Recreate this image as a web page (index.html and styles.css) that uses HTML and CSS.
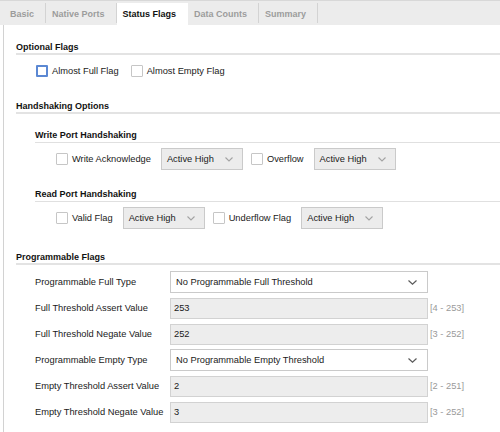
FILE: index.html
```html
<!DOCTYPE html>
<html>
<head>
<meta charset="utf-8">
<link rel="stylesheet" href="styles.css">
</head>
<body>
<div class="tabs">
  <div class="tab">Basic</div>
  <div class="tab">Native Ports</div>
  <div class="tab active">Status Flags</div>
  <div class="tab">Data Counts</div>
  <div class="tab">Summary</div>
</div>
<div class="panel">
  <div class="section-title t-optional">Optional Flags</div>
  <div class="flags-row">
    <div class="check"><span class="cb focus"></span><span>Almost Full Flag</span></div>
    <div class="check"><span class="cb"></span><span>Almost Empty Flag</span></div>
  </div>

  <div class="section-title t-hand">Handshaking Options</div>
  <div class="sub">
    <div class="sub-title t-write">Write Port Handshaking</div>
    <div class="hs-row">
      <div class="check"><span class="cb"></span><span>Write Acknowledge</span></div>
      <div class="select small"><span>Active High</span><svg class="chev" width="8" height="5" viewBox="0 0 8 5"><polyline points="0.5,0.5 4,4 7.5,0.5" /></svg></div>
      <div class="check"><span class="cb"></span><span>Overflow</span></div>
      <div class="select small"><span>Active High</span><svg class="chev" width="8" height="5" viewBox="0 0 8 5"><polyline points="0.5,0.5 4,4 7.5,0.5" /></svg></div>
    </div>
    <div class="sub-title t-read">Read Port Handshaking</div>
    <div class="hs-row">
      <div class="check"><span class="cb"></span><span>Valid Flag</span></div>
      <div class="select small"><span>Active High</span><svg class="chev" width="8" height="5" viewBox="0 0 8 5"><polyline points="0.5,0.5 4,4 7.5,0.5" /></svg></div>
      <div class="check"><span class="cb"></span><span>Underflow Flag</span></div>
      <div class="select small"><span>Active High</span><svg class="chev" width="8" height="5" viewBox="0 0 8 5"><polyline points="0.5,0.5 4,4 7.5,0.5" /></svg></div>
    </div>
  </div>

  <div class="section-title t-prog">Programmable Flags</div>
  <div class="prog-grid">
    <div class="lbl">Programmable Full Type</div>
    <div class="select wide"><span>No Programmable Full Threshold</span><svg class="chev dark" width="9" height="5" viewBox="0 0 9 5"><polyline points="0.5,0.5 4.5,4.2 8.5,0.5" /></svg></div>
    <div class="range"></div>

    <div class="lbl">Full Threshold Assert Value</div>
    <div class="field">253</div>
    <div class="range">[4 - 253]</div>

    <div class="lbl">Full Threshold Negate Value</div>
    <div class="field">252</div>
    <div class="range">[3 - 252]</div>

    <div class="lbl">Programmable Empty Type</div>
    <div class="select wide"><span>No Programmable Empty Threshold</span><svg class="chev dark" width="9" height="5" viewBox="0 0 9 5"><polyline points="0.5,0.5 4.5,4.2 8.5,0.5" /></svg></div>
    <div class="range"></div>

    <div class="lbl">Empty Threshold Assert Value</div>
    <div class="field">2</div>
    <div class="range">[2 - 251]</div>

    <div class="lbl">Empty Threshold Negate Value</div>
    <div class="field">3</div>
    <div class="range">[3 - 252]</div>
  </div>
</div>
</body>
</html>
```

FILE: styles.css
```css
html, body {
  margin: 0;
  padding: 0;
  background: #ffffff;
}
body {
  width: 500px;
  height: 432px;
  overflow: hidden;
  font-family: "Liberation Sans", Arial, sans-serif;
  font-size: 9.3px;
  color: #1a1a1a;
}

/* Tabs */
.tabs {
  display: flex;
  height: 24px;
  border-top: 1px solid #d8d8d8;
  background: #ececec;
  padding-left: 4px;
}
.tab {
  position: relative;
  margin-top: 2px;
  height: 22px;
  line-height: 22px;
  padding: 0 12px 0 6px;
  font-weight: bold;
  font-size: 9px;
  color: #9c9c9c;
  white-space: nowrap;
}
.tab::after {
  content: "";
  position: absolute;
  right: 0;
  top: 0;
  width: 1px;
  height: 20px;
  background: #d3d3d3;
}
.tab.active {
  background: #ffffff;
  color: #111111;
}
.tab.active::after {
  display: none;
}

/* Panel */
.panel {
  margin-left: 3px;
  border-left: 1px solid #d2d2d2;
  padding-left: 12px;
  height: 407px;
  box-sizing: border-box;
  overflow: hidden;
}

.section-title {
  font-weight: bold;
  font-size: 9px;
  line-height: 12px;
  color: #111111;
  border-bottom: 2px solid #e3e3e3;
}
.t-optional { margin-top: 16px; }
.t-hand { margin-top: 21px; }
.t-prog { margin-top: 22px; }

.sub {
  margin-left: 19px;
}
.sub-title {
  font-weight: bold;
  font-size: 9px;
  line-height: 12px;
  padding-bottom: 1px;
  color: #111111;
  border-bottom: 1px solid #e0e0e0;
}
.t-write { margin-top: 15px; }
.t-read { margin-top: 18px; }

/* Checkboxes */
.flags-row {
  display: flex;
  align-items: center;
  height: 16px;
  margin-top: 8px;
  margin-left: 20px;
  gap: 12px;
}
.check {
  display: flex;
  align-items: center;
  gap: 4px;
  white-space: nowrap;
}
.cb {
  display: inline-block;
  width: 12px;
  height: 12px;
  box-sizing: border-box;
  border: 1px solid #c6c6c6;
  border-radius: 1px;
  background: #ffffff;
}
.cb.focus {
  border: 2px solid #5b88d3;
}

/* Handshaking rows */
.hs-row {
  display: flex;
  align-items: center;
  height: 22px;
  margin-top: 5px;
  margin-left: 21px;
}
.hs-row .check {
  margin-right: 10px;
}
.hs-row .select {
  margin-right: 8px;
}

/* Selects */
.select {
  display: flex;
  align-items: center;
  justify-content: space-between;
  box-sizing: border-box;
  height: 22px;
  border: 1px solid #cacaca;
  padding: 0 9px 0 5px;
  white-space: nowrap;
}
.select.small {
  width: 82px;
  background: #ececec;
}
.select.wide {
  width: 258px;
  background: #ffffff;
  padding-right: 10px;
}
.chev polyline {
  fill: none;
  stroke: #a3a3a3;
  stroke-width: 1.1;
}
.chev.dark polyline {
  stroke: #5a5a5a;
  stroke-width: 1.2;
}

/* Programmable grid */
.prog-grid {
  display: grid;
  grid-template-columns: 135px 258px auto;
  grid-auto-rows: 22px;
  row-gap: 4px;
  margin-top: 6px;
  margin-left: 19px;
  align-items: center;
}
.lbl {
  white-space: nowrap;
}
.field {
  box-sizing: border-box;
  height: 21px;
  line-height: 19px;
  border: 1px solid #d2d2d2;
  background: #ededed;
  padding-left: 3px;
}
.range {
  padding-left: 2px;
  color: #9a9a9a;
  white-space: nowrap;
}
```
